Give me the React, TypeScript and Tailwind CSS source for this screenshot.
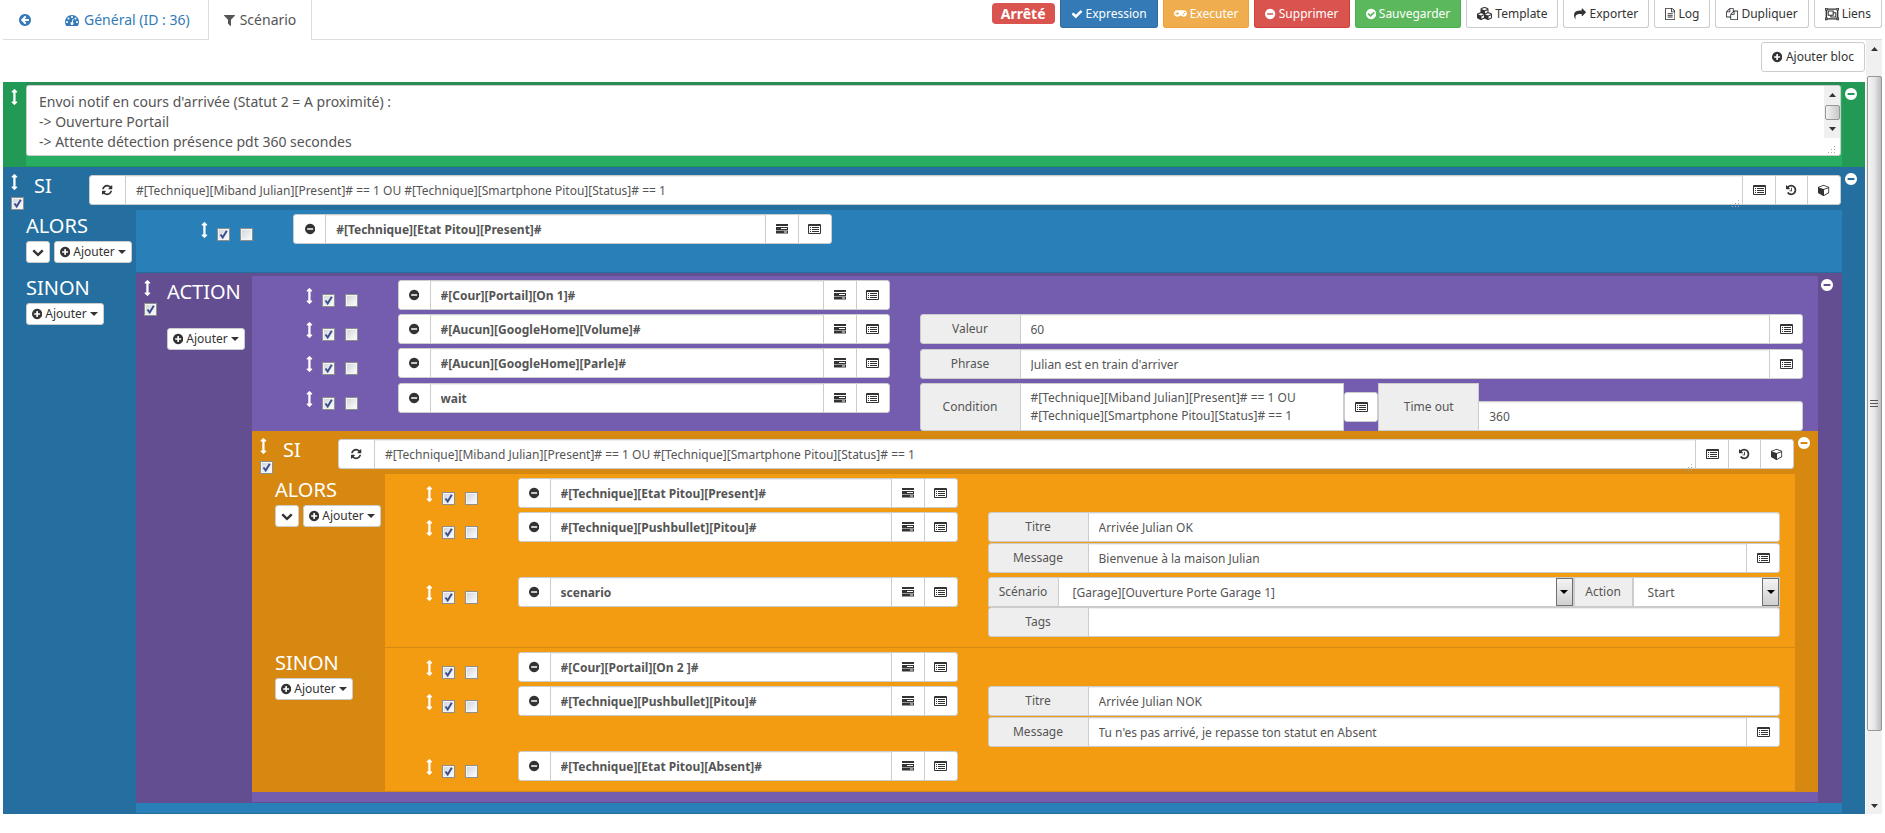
import React, { useId } from "react";
import { FaCubes, FaGamepad, FaRegObjectGroup } from "react-icons/fa";

const DISC =
  "M1664 896q0 209-103 385.5t-279.5 279.5-385.5 103-385.5-103-279.5-279.5-103-385.5 103-385.5 279.5-279.5 385.5-103 385.5 103 279.5 279.5 103 385.5z";

const ICONS = {
  back: {
    x: 128,
    w: 1536,
    d:
      "M1408 960v-128q0-26-19-45t-45-19h-502l189-189q19-19 19-45t-19-45l-91-91q-18-18-45-18t-45 18l-362 362-91 91q-18 18-18 45t18 45l91 91 362 362q18 18 45 18t45-18l91-91q18-18 18-45t-18-45l-189-189h502q26 0 45-19t19-45z" +
      DISC,
  },
  minus: {
    x: 128,
    w: 1536,
    d:
      "M1344 960v-128q0-26-19-45t-45-19h-768q-26 0-45 19t-19 45v128q0 26 19 45t45 19h768q26 0 45-19t19-45z" +
      DISC,
  },
  plus: {
    x: 128,
    w: 1536,
    d:
      "M1344 960v-128q0-26-19-45t-45-19h-256v-256q0-26-19-45t-45-19h-128q-26 0-45 19t-19 45v256h-256q-26 0-45 19t-19 45v128q0 26 19 45t45 19h256v256q0 26 19 45t45 19h128q26 0 45-19t19-45v-256h256q26 0 45-19t19-45z" +
      DISC,
  },
  checkCircle: {
    x: 128,
    w: 1536,
    d:
      "M1412 734q0-28-18-46l-91-90q-19-19-45-19t-45 19l-408 407-226-226q-19-19-45-19t-45 19l-91 90q-18 18-18 46 0 27 18 45l362 362q19 19 45 19 27 0 46-19l543-543q18-18 18-45z" +
      DISC,
  },
  dashboard: {
    x: 0,
    w: 1792,
    d: "M384 1152q0-53-37.5-90.5t-90.5-37.5-90.5 37.5-37.5 90.5 37.5 90.5 90.5 37.5 90.5-37.5 37.5-90.5zm192-448q0-53-37.5-90.5t-90.5-37.5-90.5 37.5-37.5 90.5 37.5 90.5 90.5 37.5 90.5-37.5 37.5-90.5zm428 481l101-382q6-26-7.5-48.5t-38.5-29.5-48 6.5-30 39.5l-101 382q-60 5-107 43.5t-63 98.5q-20 77 20 146t117 89 146-20 89-117q16-60-6-117t-72-91zm660-33q0-53-37.5-90.5t-90.5-37.5-90.5 37.5-37.5 90.5 37.5 90.5 90.5 37.5 90.5-37.5 37.5-90.5zm-640-640q0-53-37.5-90.5t-90.5-37.5-90.5 37.5-37.5 90.5 37.5 90.5 90.5 37.5 90.5-37.5 37.5-90.5zm448 192q0-53-37.5-90.5t-90.5-37.5-90.5 37.5-37.5 90.5 37.5 90.5 90.5 37.5 90.5-37.5 37.5-90.5zm320 448q0 261-141 483-19 29-54 29h-1402q-35 0-54-29-141-221-141-483 0-182 71-348t191-286 286-191 348-71 348 71 286 191 191 286 71 348z",
  },
  filter: {
    x: 192,
    w: 1408,
    d: "M1595 295q17 41-14 70l-493 493v742q0 42-39 59-13 5-25 5-27 0-45-19l-256-256q-19-19-19-45v-486l-493-493q-31-29-14-70 17-39 59-39h1280q42 0 59 39z",
  },
  check: {
    x: 0,
    w: 1792,
    d: "M1671 566q0 40-28 68l-724 724-136 136q-28 28-68 28t-68-28l-136-136-362-362q-28-28-28-68t28-68l136-136q28-28 68-28t68 28l294 295 656-657q28-28 68-28t68 28l136 136q28 28 28 68z",
  },
  share: {
    x: 0,
    w: 1792,
    d: "M1792 640q0 26-19 45l-512 512q-19 19-45 19t-45-19-19-45v-256h-224q-98 0-175.5 6t-154 21.5-133 42.5-105.5 69.5-80 101-48.5 138.5-17.5 181q0 55 5 123 0 6 2.5 23.5t2.5 26.5q0 15-8.5 25t-23.5 10q-16 0-28-17-7-9-13-22t-13.5-30-10.5-24q-127-285-127-451 0-199 53-333 162-403 875-403h224v-256q0-26 19-45t45-19 45 19l512 512q19 19 19 45z",
  },
  fileText: {
    x: 128,
    w: 1536,
    d: "M1596 380q28 28 48 76t20 88v1152q0 40-28 68t-68 28h-1344q-40 0-68-28t-28-68v-1600q0-40 28-68t68-28h896q40 0 88 20t76 48zm-444-244v376h376q-10-29-22-41l-313-313q-12-12-41-22zm384 1528v-1024h-416q-40 0-68-28t-28-68v-416h-768v1536h1280zm-1024-864q0-14 9-23t23-9h704q14 0 23 9t9 23v64q0 14-9 23t-23 9h-704q-14 0-23-9t-9-23v-64zm736 224q14 0 23 9t9 23v64q0 14-9 23t-23 9h-704q-14 0-23-9t-9-23v-64q0-14 9-23t23-9h704zm0 256q14 0 23 9t9 23v64q0 14-9 23t-23 9h-704q-14 0-23-9t-9-23v-64q0-14 9-23t23-9h704z",
  },
  copy: {
    x: 0,
    w: 1792,
    d: "M1696 384q40 0 68 28t28 68v1216q0 40-28 68t-68 28h-960q-40 0-68-28t-28-68v-288h-544q-40 0-68-28t-28-68v-672q0-40 20-88t48-76l408-408q28-28 76-48t88-20h416q40 0 68 28t28 68v328q68-40 128-40h416zm-544 213l-299 299h299v-299zm-640-384l-299 299h299v-299zm196 647l316-316v-416h-384v416q0 40-28 68t-68 28h-416v640h512v-256q0-40 20-88t48-76zm956 804v-1152h-384v416q0 40-28 68t-68 28h-416v640h896z",
  },
  refresh: {
    x: 128,
    w: 1536,
    d: "M1639 1056q0 5-1 7-64 268-268 434.5t-478 166.5q-146 0-282.5-55t-243.5-157l-129 129q-19 19-45 19t-45-19-19-45v-448q0-26 19-45t45-19h448q26 0 45 19t19 45-19 45l-137 137q71 66 161 102t187 36q134 0 250-65t186-179q11-17 53-117 8-23 30-23h192q13 0 22.5 9.5t9.5 22.5zm25-800v448q0 26-19 45t-45 19h-448q-26 0-45-19t-19-45 19-45l138-138q-148-137-349-137-134 0-250 65t-186 179q-11 17-53 117-8 23-30 23h-199q-13 0-22.5-9.5t-9.5-22.5v-7q65-268 270-434.5t480-166.5q146 0 284 55.5t245 156.5l130-129q19-19 45-19t45 19 19 45z",
  },
  history: {
    x: 128,
    w: 1536,
    d: "M1664 896q0 156-61 298t-164 245-245 164-298 61q-172 0-327-72.5t-264-204.5q-7-10-6.5-22.5t8.5-20.5l137-138q10-9 25-9 16 2 23 12 73 95 179 147t225 52q104 0 198.5-40.5t163.5-109.5 109.5-163.5 40.5-198.5-40.5-198.5-109.5-163.5-163.5-109.5-198.5-40.5q-98 0-188 35.5t-160 101.5l137 138q31 30 14 69-17 40-59 40h-448q-26 0-45-19t-19-45v-448q0-42 40-59 39-17 69 14l130 129q107-101 244.5-156.5t284.5-55.5q156 0 298 61t245 164 164 245 61 298zm-640-288v448q0 14-9 23t-23 9h-320q-14 0-23-9t-9-23v-64q0-14 9-23t23-9h224v-352q0-14 9-23t23-9h64q14 0 23 9t9 23z",
  },
  cube: {
    x: 0,
    w: 1792,
    d: "M896 1629l640-349v-636l-640 233v752zm-64-865l698-254-698-254-698 254zm832-252v768q0 35-18 65t-49 47l-704 384q-28 16-61 16t-61-16l-704-384q-31-17-49-47t-18-65v-768q0-40 23-73t61-47l704-256q22-8 44-8t44 8l704 256q38 14 61 47t23 73z",
  },
  chevron: {
    x: 0,
    w: 1792,
    d: "M1683 808l-742 741q-19 19-45 19t-45-19l-742-741q-19-19-19-45.5t19-45.5l166-165q19-19 45-19t45 19l531 531 531-531q19-19 45-19t45 19l166 165q19 19 19 45.5t-19 45.5z",
  },
  arrowsV: {
    x: 512,
    w: 768,
    d: "M1216 320q0 26-19 45t-45 19h-128v1024h128q26 0 45 19t19 45-19 45l-256 256q-19 19-45 19t-45-19l-256-256q-19-19-19-45t19-45 45-19h128v-1024h-128q-26 0-45-19t-19-45 19-45l256-256q19-19 45-19t45 19l256 256q19 19 19 45z",
  },
};

function Icon({ name, className = "h-3" }: { name: keyof typeof ICONS; className?: string }) {
  const { x, w, d } = ICONS[name];
  return (
    <svg
      className={`block w-auto shrink-0 ${className}`}
      viewBox={`${x} 0 ${w} 1792`}
      fill="currentColor"
      aria-hidden="true"
    >
      <path fillRule="evenodd" d={d} />
    </svg>
  );
}

const ListIcon = () => (
  <svg className="block h-[10px] w-[13px]" viewBox="0 0 13 10" fill="currentColor" aria-hidden="true">
    <path
      fillRule="evenodd"
      d="M1 0h11q1 0 1 1v8q0 1-1 1H1q-1 0-1-1V1q0-1 1-1zM1 2v7h11V2z"
    />
    <path d="M2 3h1v1H2zM2 5h1v1H2zM2 7h1v1H2zM4 3h7v1H4zM4 5h7v1H4zM4 7h7v1H4z" />
  </svg>
);

const TasksIcon = () => (
  <svg className="block h-[10px] w-[12px]" viewBox="0 0 12 10" fill="currentColor" aria-hidden="true">
    <path d="M0 0h12v2H0z" />
    <path fillRule="evenodd" d="M0 3h12v6.5H0zM5 4v1h6V4zM0 6v.4h12V6zM8 7.4v1h3v-1z" />
  </svg>
);

const Caret = () => (
  <svg className="block h-1 w-2" viewBox="0 0 8 4" fill="currentColor" aria-hidden="true">
    <path d="M0 0h8L4 4z" />
  </svg>
);

const Triangle = ({ up = false }: { up?: boolean }) => (
  <svg className="block h-1 w-[7px] text-[#333]" viewBox="0 0 7 4" fill="currentColor" aria-hidden="true">
    <path d={up ? "M0 4h7L3.5 0z" : "M0 0h7L3.5 4z"} />
  </svg>
);

const Grip = () => (
  <svg className="block h-2 w-2 text-[#aaa]" viewBox="0 0 8 8" fill="currentColor" aria-hidden="true">
    <path d="M6 0h1v1H6zM6 3h1v1H6zM3 3h1v1H3zM6 6h1v1H6zM3 6h1v1H3zM0 6h1v1H0z" />
  </svg>
);

function Check({ label, checked = false }: { label: string; checked?: boolean }) {
  return (
    <span className="relative block size-[13px]">
      <input
        type="checkbox"
        aria-label={label}
        defaultChecked={checked}
        className="peer block size-[13px] appearance-none border border-[#8e8f8f] bg-linear-to-br from-[#cfd3d9] to-white shadow-[inset_0_0_0_1px_#f4f4f4]"
      />
      <svg
        className="pointer-events-none absolute inset-0 hidden size-[13px] peer-checked:block"
        viewBox="0 0 13 13"
        fill="none"
        stroke="#3b4f8f"
        strokeWidth="2"
        aria-hidden="true"
      >
        <path d="M3.5 6.5l2.2 3L9.8 2.8" />
      </svg>
    </span>
  );
}

const Handle = () => <Icon name="arrowsV" className="h-4 text-white" />;

const cell =
  "flex h-[30px] shrink-0 items-center justify-center border border-[#ccc] bg-white text-[#333]";
const field =
  "h-[30px] min-w-0 flex-1 border border-[#ccc] bg-white px-[10px] text-xs text-[#555] shadow-[inset_0_1px_1px_rgba(0,0,0,0.07)] outline-none";

const AddButton = () => (
  <button className="flex h-[22px] items-center gap-[3px] whitespace-nowrap rounded-[3px] border border-[#ccc] bg-white px-[5px] text-xs text-[#333]">
    <Icon name="plus" />
    Ajouter
    <Caret />
  </button>
);

const RemoveBlock = () => (
  <div className="w-[23px] shrink-0 pt-[5px] pl-[3px]">
    <button aria-label="Supprimer le bloc" className="block text-white">
      <Icon name="minus" className="h-[14px]" />
    </button>
  </div>
);

const BlockHandle = () => (
  <div className="w-[23px] shrink-0 pt-[7px] pl-2">
    <Handle />
    <div className="mt-[7px]">
      <Check label="Activer le bloc" checked />
    </div>
  </div>
);

function Action({
  value,
  tall = false,
  children,
}: {
  value: string;
  tall?: boolean;
  children?: React.ReactNode;
}) {
  return (
    <div className={`mt-1 grid grid-cols-12 ${tall ? "min-h-[31px]" : ""}`}>
      <div className="col-span-1 flex items-start justify-end gap-[10px] pr-[25px]">
        <div className="flex gap-[9px]">
          <div className="mt-2">
            <Handle />
          </div>
          <div className="mt-[14px]">
            <Check label={`Activer ${value}`} checked />
          </div>
        </div>
        <div className="mt-[14px]">
          <Check label={`Exécuter ${value} en parallèle`} />
        </div>
      </div>
      <div className="col-span-4 flex items-start px-[15px]">
        <button aria-label="Retirer l'action" className={`${cell} w-[33px] rounded-l-[3px]`}>
          <Icon name="minus" />
        </button>
        <input aria-label="Commande" defaultValue={value} className={`${field} -ml-px font-bold`} />
        <button aria-label="Choisir un bloc" className={`${cell} -ml-px w-[34px]`}>
          <TasksIcon />
        </button>
        <button aria-label="Choisir une commande" className={`${cell} -ml-px w-[34px] rounded-r-[3px]`}>
          <ListIcon />
        </button>
      </div>
      <div className="col-span-7 flex flex-col justify-end px-[15px]">{children}</div>
    </div>
  );
}

const addon =
  "flex shrink-0 items-center justify-center border border-[#ccc] bg-[#eee] text-xs text-[#555]";

function Param({ label, value, pick = false }: { label: string; value: string; pick?: boolean }) {
  const id = useId();
  return (
    <div className="flex">
      <label htmlFor={id} className={`${addon} w-[101px] rounded-l-[3px]`}>
        {label}
      </label>
      <input id={id} defaultValue={value} className={`${field} -ml-px ${pick ? "" : "rounded-r-[3px]"}`} />
      {pick && (
        <button aria-label="Choisir une commande" className={`${cell} -ml-px w-[34px] rounded-r-[3px]`}>
          <ListIcon />
        </button>
      )}
    </div>
  );
}

function Select({ id, value }: { id: string; value: string }) {
  return (
    <div className="relative">
      <select
        id={id}
        className="block h-[30px] w-full appearance-none border border-[#ccc] bg-white px-[14px] pt-px text-xs text-[#555] outline-none"
      >
        <option>{value}</option>
      </select>
      <span className="pointer-events-none absolute top-px right-px flex h-7 w-[17px] items-center justify-center border border-[#707070] bg-linear-to-b from-[#f4f4f4] to-[#cfcfcf] text-black">
        <Caret />
      </span>
    </div>
  );
}

function Condition({ value, name }: { value: string; name: string }) {
  return (
    <div className="flex min-w-0 flex-1">
      <button aria-label="Répéter" className={`${cell} w-[37px] rounded-l-[3px]`}>
        <Icon name="refresh" />
      </button>
      <div className="relative -ml-px flex min-w-0 flex-1">
        <textarea
          aria-label={name}
          rows={1}
          defaultValue={value}
          className={`${field} resize-none overflow-hidden pt-[6px] pb-1 leading-[18px]`}
        />
        <span className="pointer-events-none absolute right-[3px] bottom-[2px]">
          <Grip />
        </span>
      </div>
      <button aria-label="Choisir une commande" className={`${cell} -ml-px w-[34px]`}>
        <ListIcon />
      </button>
      <button aria-label="Historique" className={`${cell} -ml-px w-[33px]`}>
        <Icon name="history" />
      </button>
      <button aria-label="Choisir un objet" className={`${cell} -ml-px w-[34px] rounded-r-[3px]`}>
        <Icon name="cube" />
      </button>
    </div>
  );
}

function SiBlock({ dark, name, children }: { dark: string; name: string; children: React.ReactNode }) {
  return (
    <section className={`flex ${dark}`}>
      <div className="min-w-0 flex-1">
        <div className="flex h-[43px] pr-px">
          <BlockHandle />
          <h2 className="w-[63px] shrink-0 pt-2 pl-2 text-xl leading-[22px] text-white">SI</h2>
          <div className="flex min-w-0 flex-1 pt-2">
            <Condition
              name={name}
              value="#[Technique][Miband Julian][Present]# == 1 OU #[Technique][Smartphone Pitou][Status]# == 1"
            />
          </div>
        </div>
        {children}
      </div>
      <RemoveBlock />
    </section>
  );
}

function Branch({
  title,
  light,
  collapsible = false,
  children,
}: {
  title: string;
  light: string;
  collapsible?: boolean;
  children: React.ReactNode;
}) {
  return (
    <div className="flex">
      <div className={`w-[133px] shrink-0 pl-[23px] ${collapsible ? "pt-[5px] pb-[10px]" : "pt-1 pb-[11px]"}`}>
        <h3 className="text-xl leading-[22px] text-white">{title}</h3>
        <div className="mt-1 flex gap-1">
          {collapsible && (
            <button
              aria-label="Replier"
              className="flex h-[22px] w-6 items-center justify-center rounded-[3px] border border-[#ccc] bg-white text-[#333]"
            >
              <Icon name="chevron" />
            </button>
          )}
          <AddButton />
        </div>
      </div>
      <div className={`min-w-0 flex-1 border-b pb-[10px] ${light}`}>{children}</div>
    </div>
  );
}

const TopButton = ({ tone, children }: { tone: string; children: React.ReactNode }) => (
  <button
    className={`flex h-7 items-center gap-[3px] whitespace-nowrap rounded-b-[3px] border border-t-0 px-[10px] text-xs ${tone}`}
  >
    {children}
  </button>
);

const plain = "border-[#ccc] bg-white text-[#333]";

export default function App() {
  return (
    <div className="bg-white px-[3px] font-['Noto_Sans','Open_Sans',sans-serif] text-[#555]">
      <header className="flex h-10 justify-between border-b border-[#ddd]">
        <nav className="flex text-sm leading-5">
          <a href="#retour" aria-label="Retour" className="mr-[2px] flex items-center px-4 text-[#337ab7]">
            <Icon name="back" className="h-[14px]" />
          </a>
          <a href="#general" className="mr-[2px] flex items-center gap-[5px] px-4 text-[#337ab7]">
            <Icon name="dashboard" className="h-[14px]" />
            Général (ID : 36)
          </a>
          <a
            href="#scenario"
            className="-mb-px flex items-center gap-[5px] border-x border-[#ddd] bg-white px-[15px] text-[#555]"
          >
            <Icon name="filter" className="h-[14px]" />
            Scénario
          </a>
        </nav>
        <div className="flex items-start gap-[5px]">
          <span className="mt-[3px] flex h-[21px] items-center rounded-[4px] bg-[#d9534f] px-[9px] text-sm font-bold text-white">
            Arrêté
          </span>
          <TopButton tone="border-[#2e6da4] bg-[#337ab7] text-white">
            <Icon name="check" />
            Expression
          </TopButton>
          <TopButton tone="border-[#eea236] bg-[#f0ad4e] text-white">
            <FaGamepad className="size-[13px]" />
            Executer
          </TopButton>
          <TopButton tone="border-[#d43f3a] bg-[#d9534f] text-white">
            <Icon name="minus" />
            Supprimer
          </TopButton>
          <TopButton tone="border-[#4cae4c] bg-[#5cb85c] text-white">
            <Icon name="checkCircle" />
            Sauvegarder
          </TopButton>
          <TopButton tone={plain}>
            <FaCubes className="size-[15px]" />
            Template
          </TopButton>
          <TopButton tone={plain}>
            <Icon name="share" />
            Exporter
          </TopButton>
          <TopButton tone={plain}>
            <Icon name="fileText" />
            Log
          </TopButton>
          <TopButton tone={plain}>
            <Icon name="copy" />
            Dupliquer
          </TopButton>
          <TopButton tone={plain}>
            <FaRegObjectGroup className="size-[14px]" />
            Liens
          </TopButton>
        </div>
      </header>

      <div className="flex">
        <main className="min-w-0 flex-1">
          <div className="flex justify-end pt-[2px] pb-[10px]">
            <button className="flex h-[30px] items-center gap-1 rounded-[3px] border border-[#ccc] bg-white px-[10px] text-xs text-[#333]">
              <Icon name="plus" />
              Ajouter bloc
            </button>
          </div>

          <section className="flex bg-[#229954]">
            <div className="w-[23px] shrink-0 pt-[7px] pl-2">
              <Handle />
            </div>
            <div className="min-w-0 flex-1 border-t-3 border-b border-t-[#2a8b54] border-b-[#229954] bg-[#27ae60] pr-px pb-[10px]">
              <div className="flex h-[71px] overflow-hidden rounded-[3px] border border-[#ccc] bg-white">
                <textarea
                  aria-label="Commentaire"
                  className="min-w-0 flex-1 resize-none overflow-hidden bg-white px-3 py-[6px] text-sm leading-5 text-[#555] outline-none"
                  defaultValue={
                    "Envoi notif en cours d'arrivée (Statut 2 = A proximité) :\n-> Ouverture Portail\n-> Attente détection présence pdt 360 secondes"
                  }
                />
                <div className="flex w-4 flex-col items-center" aria-hidden="true">
                  <div className="flex h-[52px] w-full flex-col items-center justify-between bg-[#f0f0f0] py-[7px]">
                    <Triangle up />
                    <span className="h-[15px] w-[15px] rounded-[2px] border border-[#979797] bg-linear-to-r from-[#f2f2f2] to-[#c8c8cc]" />
                    <Triangle />
                  </div>
                  <div className="pt-2">
                    <Grip />
                  </div>
                </div>
              </div>
            </div>
            <RemoveBlock />
          </section>

          <SiBlock dark="bg-[#246f9f]" name="Condition principale">
            <Branch title="ALORS" collapsible light="border-[#246f9f] bg-[#2980b9]">
              <Action value="#[Technique][Etat Pitou][Present]#" />
            </Branch>
            <Branch title="SINON" light="border-[#246f9f] bg-[#2980b9]">
              <section className="flex bg-[#634e92] pr-px">
                <BlockHandle />
                <div className="w-[93px] shrink-0 pt-2 pl-2">
                  <h2 className="text-xl leading-[22px] text-white">ACTION</h2>
                  <div className="mt-[25px] flex">
                    <AddButton />
                  </div>
                </div>
                <div className="min-w-0 flex-1 border-t-3 border-b border-[#634e92] bg-[#745cae] pb-[10px]">
                  <Action value="#[Cour][Portail][On 1]#" />
                  <Action value="#[Aucun][GoogleHome][Volume]#">
                    <Param label="Valeur" value="60" pick />
                  </Action>
                  <Action value="#[Aucun][GoogleHome][Parle]#" tall>
                    <Param label="Phrase" value="Julian est en train d'arriver" pick />
                  </Action>
                  <Action value="wait">
                    <div className="flex h-12 items-stretch">
                      <label htmlFor="wait-condition" className={`${addon} w-[101px] rounded-l-[3px]`}>
                        Condition
                      </label>
                      <textarea
                        id="wait-condition"
                        className="-ml-px min-w-0 flex-1 resize-none overflow-hidden border border-[#ccc] bg-white px-[10px] py-[5px] text-xs leading-[18px] text-[#555] outline-none"
                        defaultValue={
                          "#[Technique][Miband Julian][Present]# == 1 OU\n#[Technique][Smartphone Pitou][Status]# == 1"
                        }
                      />
                      <button
                        aria-label="Choisir une commande"
                        className={`${cell} w-[34px] self-center rounded-[3px]`}
                      >
                        <ListIcon />
                      </button>
                      <label htmlFor="wait-timeout" className={`${addon} w-[101px]`}>
                        Time out
                      </label>
                      <input
                        id="wait-timeout"
                        defaultValue="360"
                        className={`${field} -ml-px self-end rounded-r-[3px]`}
                      />
                    </div>
                  </Action>

                  <SiBlock dark="bg-[#d68810]" name="Condition secondaire">
                    <Branch title="ALORS" collapsible light="border-[#d68810] bg-[#f39c12]">
                      <Action value="#[Technique][Etat Pitou][Present]#" />
                      <Action value="#[Technique][Pushbullet][Pitou]#">
                        <div className="flex flex-col gap-px">
                          <Param label="Titre" value="Arrivée Julian OK" />
                          <Param label="Message" value="Bienvenue à la maison Julian" pick />
                        </div>
                      </Action>
                      <Action value="scenario">
                        <div className="flex">
                          <label htmlFor="sc-name" className={`${addon} w-[71px] rounded-tl-[3px]`}>
                            Scénario
                          </label>
                          <div className="-ml-px min-w-0 flex-[7]">
                            <Select id="sc-name" value="[Garage][Ouverture Porte Garage 1]" />
                          </div>
                          <label htmlFor="sc-action" className={`${addon} w-[59px]`}>
                            Action
                          </label>
                          <div className="min-w-0 flex-[2]">
                            <Select id="sc-action" value="Start" />
                          </div>
                        </div>
                        <Param label="Tags" value="" />
                      </Action>
                    </Branch>
                    <Branch title="SINON" light="border-[#d68810] bg-[#f39c12]">
                      <Action value="#[Cour][Portail][On 2 ]#" />
                      <Action value="#[Technique][Pushbullet][Pitou]#">
                        <div className="flex flex-col gap-px">
                          <Param label="Titre" value="Arrivée Julian NOK" />
                          <Param
                            label="Message"
                            value="Tu n'es pas arrivé, je repasse ton statut en Absent"
                            pick
                          />
                        </div>
                      </Action>
                      <Action value="#[Technique][Etat Pitou][Absent]#" />
                    </Branch>
                  </SiBlock>
                </div>
                <RemoveBlock />
              </section>
            </Branch>
          </SiBlock>
        </main>

        <div
          className="ml-px flex w-4 shrink-0 flex-col items-center bg-[#f0f0f0]"
          aria-hidden="true"
        >
          <div className="h-9 pt-[7px]">
            <Triangle up />
          </div>
          <div className="flex w-[15px] flex-1 flex-col items-center justify-center gap-[2px] rounded-[2px] border border-[#979797] bg-linear-to-r from-[#f5f5f5] via-[#e6e6e8] to-[#bcbcc2]">
            <span className="h-px w-2 bg-[#555]" />
            <span className="h-px w-2 bg-[#555]" />
            <span className="h-px w-2 bg-[#555]" />
          </div>
          <div className="flex h-[83px] items-end pb-[6px]">
            <Triangle />
          </div>
        </div>
      </div>
    </div>
  );
}
